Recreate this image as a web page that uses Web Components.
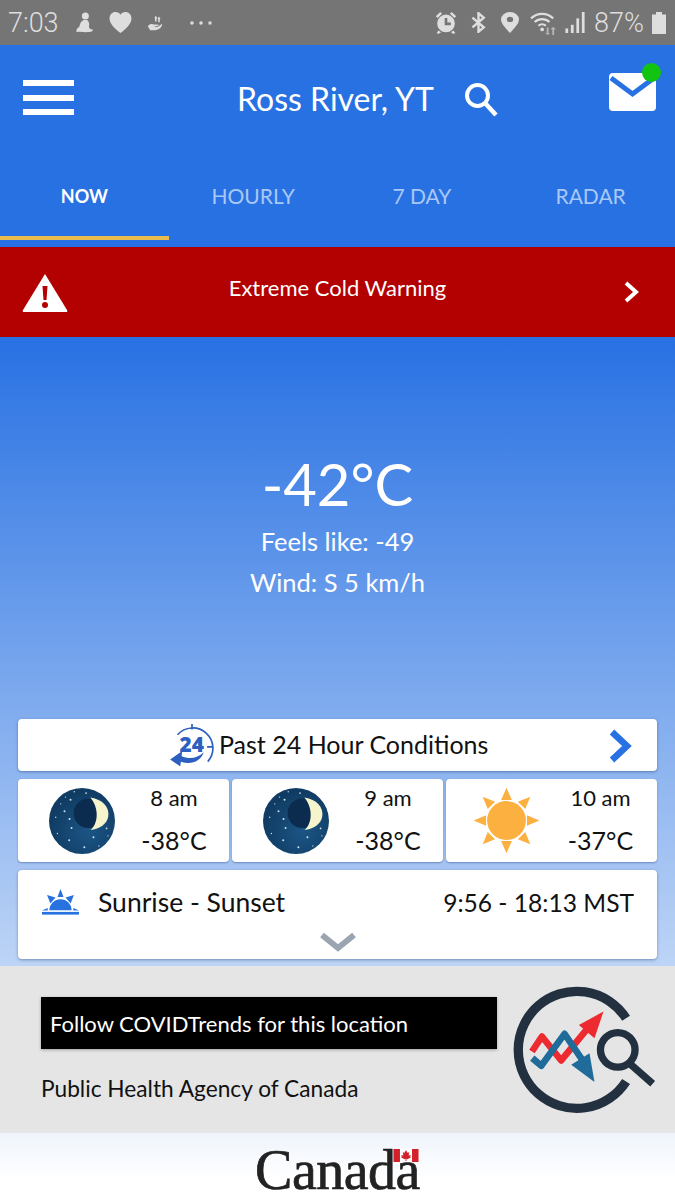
<!DOCTYPE html>
<html>
<head>
<meta charset="utf-8">
<title>Ross River, YT</title>
<style>
  html, body { margin: 0; padding: 0; }
  body { width: 675px; height: 1200px; overflow: hidden; font-family: "Lato", "Open Sans", sans-serif; color: #111; }
</style>
</head>
<body>
<status-bar></status-bar>
<app-header place="Ross River, YT"></app-header>
<tab-bar>
  <tab-item active>NOW</tab-item>
  <tab-item>HOURLY</tab-item>
  <tab-item>7 DAY</tab-item>
  <tab-item>RADAR</tab-item>
</tab-bar>
<alert-banner>Extreme Cold Warning</alert-banner>
<weather-main>
  <current-conditions temp="-42°C" feels="Feels like: -49" wind="Wind: S 5 km/h"></current-conditions>
  <past-card>Past 24 Hour Conditions</past-card>
  <hour-row>
    <hour-card time="8 am" temp="-38°C" icon="moon"></hour-card>
    <hour-card time="9 am" temp="-38°C" icon="moon"></hour-card>
    <hour-card time="10 am" temp="-37°C" icon="sun"></hour-card>
  </hour-row>
  <sun-card label="Sunrise - Sunset" times="9:56 - 18:13 MST"></sun-card>
</weather-main>
<covid-promo></covid-promo>
<canada-footer></canada-footer>

<script>
const moonSvg = `
<svg width="66" height="66" viewBox="147 235 196 196">
  <defs><radialGradient id="sky" cx="60%" cy="65%" r="60%"><stop offset="0" stop-color="#1b5585"/><stop offset="1" stop-color="#103c63"/></radialGradient></defs>
  <circle cx="245" cy="333" r="98" fill="url(#sky)"/>
  <circle cx="264" cy="310" r="44" fill="#0b2c4e"/>
  <path d="M270 263 C306 268 328 292 323 320 C319 342 298 358 270 360 C292 342 298 298 270 263Z" fill="#f6f4cd"/>
  <g fill="#cfe0ee">
    <circle cx="222" cy="246" r="2"/><circle cx="257" cy="250" r="2.5"/><circle cx="196" cy="262" r="2"/><circle cx="211" cy="270" r="3"/>
    <circle cx="182" cy="282" r="2"/><circle cx="193" cy="304" r="3"/><circle cx="167" cy="322" r="2"/><circle cx="208" cy="327" r="3"/>
    <circle cx="214" cy="354" r="3"/><circle cx="172" cy="370" r="2"/><circle cx="207" cy="390" r="3"/><circle cx="252" cy="411" r="3"/>
    <circle cx="279" cy="381" r="3"/><circle cx="318" cy="355" r="2.5"/><circle cx="322" cy="377" r="2"/><circle cx="295" cy="407" r="2"/>
  </g>
</svg>`

const sunSvg = `
<svg width="67" height="67" viewBox="411 233 200 200" style="margin-left:-4px">
  <circle cx="511" cy="333" r="58" fill="#fbb040"/>
  <g fill="#fbb040">
    <path d="M511 235 L527 272 L495 272Z"/>
    <path d="M511 431 L527 394 L495 394Z"/>
    <path d="M413 333 L450 317 L450 349Z"/>
    <path d="M609 333 L572 317 L572 349Z"/>
    <path d="M440 262 L477 277 L455 299Z"/>
    <path d="M582 262 L567 299 L545 277Z"/>
    <path d="M440 404 L455 367 L477 389Z"/>
    <path d="M582 404 L545 389 L567 367Z"/>
  </g>
</svg>`

class StatusBar extends HTMLElement {
  constructor() {
    super();
    this.attachShadow({mode: 'open'}).innerHTML = `
    <style>
      :host { display: flex; align-items: center; height: 45px; background: #757575; color: #dedede; padding: 0 9px 0 8px; box-sizing: border-box; font-family: "Roboto", sans-serif; }
      .time { font-size: 27px; font-weight: 300; width: 67px; }
      .left { display: flex; align-items: center; gap: 15px; }
      .right { margin-left: auto; display: flex; align-items: center; gap: 10px; }
      .pct { font-size: 27px; font-weight: 300; margin-left: -1px; }
      svg { display: block; fill: #dedede; }
    </style>
    <span class="time">7:03</span>
    <div class="left">
      <svg width="19" height="21" viewBox="0 0 20 24"><circle cx="11" cy="4.500" r="4"/><path d="M9 9 C5 11 5 14 4 17 C2 18 0 20 1 23 C5 22 8 23 12 23 C16 23 19 23 20 20 C17 20 16 19 15 17 C16 13 15 11 13 9Z"/></svg>
      <svg width="23" height="21" viewBox="0 0 24 23"><path d="M12 23 C6 18 0 13 0 7 C0 3 3 0 6.500 0 C9 0 11 1 12 3 C13 1 15 0 17.500 0 C21 0 24 3 24 7 C24 13 18 18 12 23Z"/></svg>
      <svg width="16" height="16" viewBox="0 0 18 20"><path d="M10 1 L12 4 L11 4 L11 8 L9 8 L9 4 L8 4Z M13 9 L13 5 L12 5 L14 2 L16 5 L15 5 L15 9Z"/><path d="M0 14 C3 11 5 11 8 12 L13 12 C14 13 13 14 11 14 L9 14 L9 15 L12 15 L18 11 C18 15 14 19 9 19 L3 19Z"/></svg>
      <svg width="22" height="4" viewBox="0 0 22 4" style="margin-left:12px"><circle cx="2" cy="2" r="1.800"/><circle cx="11" cy="2" r="1.800"/><rect x="18.500" y=".5" width="3" height="3"/></svg>
    </div>
    <div class="right">
      <svg width="24" height="23" viewBox="0 0 25 26"><path d="M12.500 4 A10 10 0 1 0 12.500 24 A10 10 0 1 0 12.500 4Z M11 8 L14 8 L14 13 L18 13 L18 16 L11 16Z" fill-rule="evenodd"/><path d="M1 6 L6 1 L8 3 L3 8Z M24 6 L19 1 L17 3 L22 8Z M4 22 L7 24 L4 26 L2 25Z M21 22 L18 24 L21 26 L23 25Z"/></svg>
      <svg width="19" height="21" viewBox="0 0 21 26" style="margin-left:1px"><path d="M3 7 L17 19 L10.500 24.500 L10.500 1.500 L17 7 L3 19" fill="none" stroke="#dedede" stroke-width="3"/></svg>
      <svg width="18" height="21" viewBox="0 0 17 24" preserveAspectRatio="none" style="margin-left:3px"><path d="M8.500 0 A8.500 8.500 0 0 1 17 8.500 C17 14 11 20 8.500 24 C6 20 0 14 0 8.500 A8.500 8.500 0 0 1 8.500 0Z M8.500 5.500 A3 3 0 1 0 8.500 11.500 A3 3 0 1 0 8.500 5.500Z" fill-rule="evenodd"/></svg>
      <svg width="29" height="24" viewBox="0 0 29 26"><g fill="none" stroke="#dedede" stroke-width="2.400"><path d="M1 8 A17 17 0 0 1 25 8"/><path d="M5 12 A11.500 11.500 0 0 1 21 12"/><path d="M9 16 A6 6 0 0 1 17 16"/></g><circle cx="13" cy="20" r="2"/><path d="M18 18 L20 18 L20 24 L22 24 L19 26 L16 24 L18 24Z M26 26 L24 26 L24 20 L22 20 L25 17 L28 20 L26 20Z" opacity=".6"/></svg>
      <svg width="20" height="21" viewBox="0 0 21 23" style="margin-left:-3px"><rect x="0" y="18" width="3" height="5"/><rect x="6" y="14" width="3" height="9"/><rect x="12" y="7" width="3" height="16"/><rect x="18" y="0" width="3" height="23"/></svg>
      <span class="pct">87%</span>
      <svg width="14" height="22" viewBox="0 0 14 26" preserveAspectRatio="none" style="margin-left:-2px"><path d="M4 0 L10 0 L10 3 L14 3 L14 26 L0 26 L0 3 L4 3Z"/></svg>
    </div>
    `;
  }
}

class AppHeader extends HTMLElement {
  constructor() {
    super();
    this.attachShadow({mode: 'open'}).innerHTML = `
    <style>
      :host { display: flex; align-items: flex-start; height: 106px; background: #2871e3; position: relative; padding: 0 19px 0 23px; box-sizing: border-box; color: #fff; }
      .burger { display: flex; flex-direction: column; gap: 8.500px; margin-top: 35px; }
      .burger i { display: block; width: 51px; height: 6px; background: #fff; }
      .place { position: absolute; left: 237px; top: 32px; display: flex; align-items: center; }
      .name { font-size: 32px; line-height: 44px; white-space: nowrap; }
      .search { margin-left: 30px; display: block; }
      .mail { margin-left: auto; margin-top: 28px; position: relative; width: 47px; height: 38px; background: #fff; border-radius: 4px; }
      .mail svg { display: block; }
      .dot { position: absolute; right: -5px; top: -10px; width: 19px; height: 19px; background: #12c312; border-radius: 50%; }
    </style>
    <div class="burger"><i></i><i></i><i></i></div>
    <div class="place">
      <span class="name"></span>
      <svg class="search" width="34" height="35" viewBox="0 0 34 35"><circle cx="13.500" cy="13.500" r="10.500" fill="none" stroke="#fff" stroke-width="4"/><path d="M21 21 L32 33" stroke="#fff" stroke-width="4.500" fill="none"/></svg>
    </div>
    <div class="mail">
      <svg width="47" height="38" viewBox="0 0 47 38"><path d="M2 5 L23.500 21 L45 5" fill="none" stroke="#2871e3" stroke-width="5"/></svg>
      <span class="dot"></span>
    </div>
    `;
    this.shadowRoot.querySelector('.name').textContent = this.getAttribute('place');
  }
}

class TabBar extends HTMLElement {
  constructor() {
    super();
    this.attachShadow({mode: 'open'}).innerHTML = `
    <style>
      :host { display: grid; grid-template-columns: repeat(4, 1fr); height: 96px; background: #2871e3; }
    </style>
    <slot></slot>
    `;
  }
}

class TabItem extends HTMLElement {
  constructor() {
    super();
    this.attachShadow({mode: 'open'}).innerHTML = `
    <style>
      :host { display: flex; justify-content: center; align-items: flex-start; height: 89px; box-sizing: border-box; padding-top: 30px; font-size: 21px; line-height: 30px; color: #a9c8f5; border-bottom: 4px solid transparent; }
      :host([active]) { color: #fff; font-weight: 700; font-size: 18px; border-bottom-color: #e8bb4c; }
    </style>
    <slot></slot>
    `;
  }
}

class AlertBanner extends HTMLElement {
  constructor() {
    super();
    this.attachShadow({mode: 'open'}).innerHTML = `
    <style>
      :host { display: flex; align-items: center; justify-content: space-between; height: 90px; background: #b30000; color: #fff; padding: 0 36px 0 22px; box-sizing: border-box; position: relative; font-size: 22px; }
      span { position: absolute; left: 0; right: 0; top: 25px; text-align: center; line-height: 32px; }
      svg { display: block; }
    </style>
    <svg width="46" height="39" viewBox="0 0 46 39"><path d="M23 1 L45 37 Q46 39 44 39 L2 39 Q0 39 1 37Z" fill="#fff"/><path d="M20.500 13 L25.500 13 L24.500 27 L21.500 27Z" fill="#b30000"/><circle cx="23" cy="32" r="3" fill="#b30000"/></svg>
    <span><slot></slot></span>
    <svg width="15" height="22" viewBox="0 0 15 22"><path d="M2 2 L12 11 L2 20" fill="none" stroke="#fff" stroke-width="4"/></svg>
    `;
  }
}

class WeatherMain extends HTMLElement {
  constructor() {
    super();
    this.attachShadow({mode: 'open'}).innerHTML = `
    <style>
      :host { display: flex; flex-direction: column; height: 629px; box-sizing: border-box; padding: 0 18px; background: linear-gradient(#2871e3, #bdd4f6); }
    </style>
    <slot></slot>
    `;
  }
}

class CurrentConditions extends HTMLElement {
  constructor() {
    super();
    this.attachShadow({mode: 'open'}).innerHTML = `
    <style>
      :host { display: flex; flex-direction: column; align-items: center; height: 382px; padding-top: 115px; box-sizing: border-box; color: #fff; }
      .temp { font-size: 58px; line-height: 64px; height: 69px; }
      .sub { font-size: 25.500px; line-height: 41px; }
    </style>
    <div class="temp"></div>
    <div class="sub feels"></div>
    <div class="sub wind"></div>
    `;
    const root = this.shadowRoot;
    root.querySelector('.temp').textContent = this.getAttribute('temp');
    root.querySelector('.feels').textContent = this.getAttribute('feels');
    root.querySelector('.wind').textContent = this.getAttribute('wind');
  }
}

class PastCard extends HTMLElement {
  constructor() {
    super();
    this.attachShadow({mode: 'open'}).innerHTML = `
    <style>
      :host { display: flex; align-items: center; height: 52px; background: #fff; border-radius: 4px; box-shadow: 0 1px 3px rgba(20,50,110,.45); position: relative; padding-left: 152px; box-sizing: border-box; font-size: 25px; color: #111; }
      .txt { margin-left: 5px; white-space: nowrap; position: relative; top: -1px; }
      .next { position: absolute; right: 25px; top: 10px; }
      svg { display: block; }
    </style>
    <svg width="44" height="42" viewBox="510 40 130 125">
      <path d="M532 72 A60 60 0 0 1 622 152" fill="none" stroke="#2c5fbf" stroke-width="5"/>
      <path d="M575 40 L575 56 M620 108 L636 108" stroke="#2c5fbf" stroke-width="5"/>
      <path d="M610 124 C592 142 568 146 544 136 L546 120 L510 146 L540 166 L542 152 C572 162 600 152 610 124Z" fill="#2c5fbf"/>
      <text x="574" y="124" text-anchor="middle" font-family="Open Sans, sans-serif" font-size="62" font-weight="800" fill="#2c5fbf">24</text>
    </svg>
    <span class="txt"><slot></slot></span>
    <svg class="next" width="24" height="34" viewBox="0 0 24 34"><path d="M4 3 L19 17 L4 31" fill="none" stroke="#2871e3" stroke-width="6.500"/></svg>
    `;
  }
}

class HourRow extends HTMLElement {
  constructor() {
    super();
    this.attachShadow({mode: 'open'}).innerHTML = `
    <style>
      :host { display: grid; grid-template-columns: repeat(3, 1fr); gap: 3px; margin-top: 8px; }
    </style>
    <slot></slot>
    `;
  }
}

class HourCard extends HTMLElement {
  constructor() {
    super();
    this.attachShadow({mode: 'open'}).innerHTML = `
    <style>
      :host { display: flex; align-items: center; height: 83px; background: #fff; border-radius: 4px; box-shadow: 0 1px 2px rgba(20,50,110,.4); box-sizing: border-box; padding-left: 31px; color: #111; }
      svg { display: block; }
      .vals { flex: 1; display: flex; flex-direction: column; align-items: center; padding-left: 20px; padding-right: 16px; }
      .time { font-size: 22px; line-height: 30px; }
      .temp { font-size: 25px; line-height: 36px; margin-top: 9px; }
    </style>
    <span class="icon"></span>
    <div class="vals"><div class="time"></div><div class="temp"></div></div>
    `;
    const root = this.shadowRoot;
    root.querySelector('.icon').innerHTML = this.getAttribute('icon') === 'sun' ? sunSvg : moonSvg;
    root.querySelector('.time').textContent = this.getAttribute('time');
    root.querySelector('.temp').textContent = this.getAttribute('temp');
  }
}

class SunCard extends HTMLElement {
  constructor() {
    super();
    this.attachShadow({mode: 'open'}).innerHTML = `
    <style>
      :host { display: block; height: 89px; margin-top: 8px; background: #fff; border-radius: 4px; box-shadow: 0 1px 3px rgba(20,50,110,.45); box-sizing: border-box; padding: 15px 23px 0 24px; color: #111; font-size: 26.500px; }
      .row { display: flex; align-items: center; height: 34px; }
      .label { margin-left: 19px; }
      .times { margin-left: auto; font-size: 24.600px; }
      .more { display: block; margin: 13px auto 0; }
      svg { display: block; }
    </style>
    <div class="row">
      <svg width="37" height="26" viewBox="125 532 110 77">
        <path d="M147 595 A33 33 0 0 1 213 595Z" fill="#2872e0"/>
        <path d="M180 532 L189 556 L171 556Z M140 550 L165 557 L150 575Z M220 550 L195 557 L210 575Z M125 596 L142 588 L142 596Z M235 596 L218 588 L218 596Z" fill="#2872e0"/>
        <rect x="125" y="600" width="110" height="8" fill="#2872e0"/>
      </svg>
      <span class="label"></span>
      <span class="times"></span>
    </div>
    <svg class="more" width="36" height="20" viewBox="0 0 36 20"><path d="M2 3 L18 16 L34 3" fill="none" stroke="#9aa5b1" stroke-width="6"/></svg>
    `;
    const root = this.shadowRoot;
    root.querySelector('.label').textContent = this.getAttribute('label');
    root.querySelector('.times').textContent = this.getAttribute('times');
  }
}

class CovidPromo extends HTMLElement {
  constructor() {
    super();
    this.attachShadow({mode: 'open'}).innerHTML = `
    <style>
      :host { display: flex; height: 167px; background: #e5e5e5; box-sizing: border-box; padding: 22px 0 0 41px; color: #111; }
      .info { width: 456px; flex: none; }
      .btn { height: 52px; margin-top: 9px; background: #000; color: #fff; font-size: 22px; line-height: 54px; padding-left: 9px; box-shadow: 0 1px 3px rgba(0,0,0,.3); }
      .org { font-size: 22.700px; line-height: 30px; margin-top: 25px; }
      svg { display: block; margin: -3px 0 0 16px; flex: none; }
    </style>
    <div class="info">
      <div class="btn">Follow COVIDTrends for this location</div>
      <div class="org">Public Health Agency of Canada</div>
    </div>
    <svg width="143" height="129" viewBox="100 46 430 386">
      <path d="M440 145 A176 176 0 1 0 440 335" fill="none" stroke="#22303f" stroke-width="28"/>
      <circle cx="415" cy="240" r="52" fill="none" stroke="#22303f" stroke-width="22"/>
      <path d="M455 285 L520 342" fill="none" stroke="#22303f" stroke-width="22"/>
      <path d="M157 245 L187 200 L245 272 L325 175" fill="none" stroke="#ec2a30" stroke-width="20" stroke-linejoin="round"/>
      <path d="M372 125 L298 165 L345 205Z" fill="#ec2a30"/>
      <path d="M158 265 L185 288 L255 192 L315 280" fill="none" stroke="#1f6b99" stroke-width="20" stroke-linejoin="round"/>
      <path d="M345 337 L275 285 L330 250Z" fill="#1f6b99"/>
    </svg>
    `;
  }
}

class CanadaFooter extends HTMLElement {
  constructor() {
    super();
    this.attachShadow({mode: 'open'}).innerHTML = `
    <style>
      :host { display: flex; justify-content: center; height: 67px; background: linear-gradient(#eff4fc, #fff 70%); }
      .word { position: relative; font-family: "Liberation Serif", serif; font-size: 56px; line-height: 66px; color: #222; letter-spacing: -.5px; -webkit-text-stroke: .7px #222; margin-top: 4px; height: 63px; }
      .flag { position: absolute; right: 1px; top: 12px; display: block; }
    </style>
    <div class="word">Canada
      <svg class="flag" width="26" height="13" viewBox="0 0 27 14">
        <rect width="27" height="14" fill="#fff"/>
        <rect width="7" height="14" fill="#d3212b"/><rect x="20" width="7" height="14" fill="#d3212b"/>
        <path d="M13.500 1 L15 4 L17 3.500 L16.300 7 L18.500 6.500 L18 8.500 L19 9 L15 11 L14 10.500 L14 13 L13 13 L13 10.500 L12 11 L8 9 L9 8.500 L8.500 6.500 L10.700 7 L10 3.500 L12 4Z" fill="#d3212b"/>
      </svg>
    </div>
    `;
  }
}

customElements.define('status-bar', StatusBar);
customElements.define('app-header', AppHeader);
customElements.define('tab-bar', TabBar);
customElements.define('tab-item', TabItem);
customElements.define('alert-banner', AlertBanner);
customElements.define('weather-main', WeatherMain);
customElements.define('current-conditions', CurrentConditions);
customElements.define('past-card', PastCard);
customElements.define('hour-row', HourRow);
customElements.define('hour-card', HourCard);
customElements.define('sun-card', SunCard);
customElements.define('covid-promo', CovidPromo);
customElements.define('canada-footer', CanadaFooter);
</script>
</body>
</html>
